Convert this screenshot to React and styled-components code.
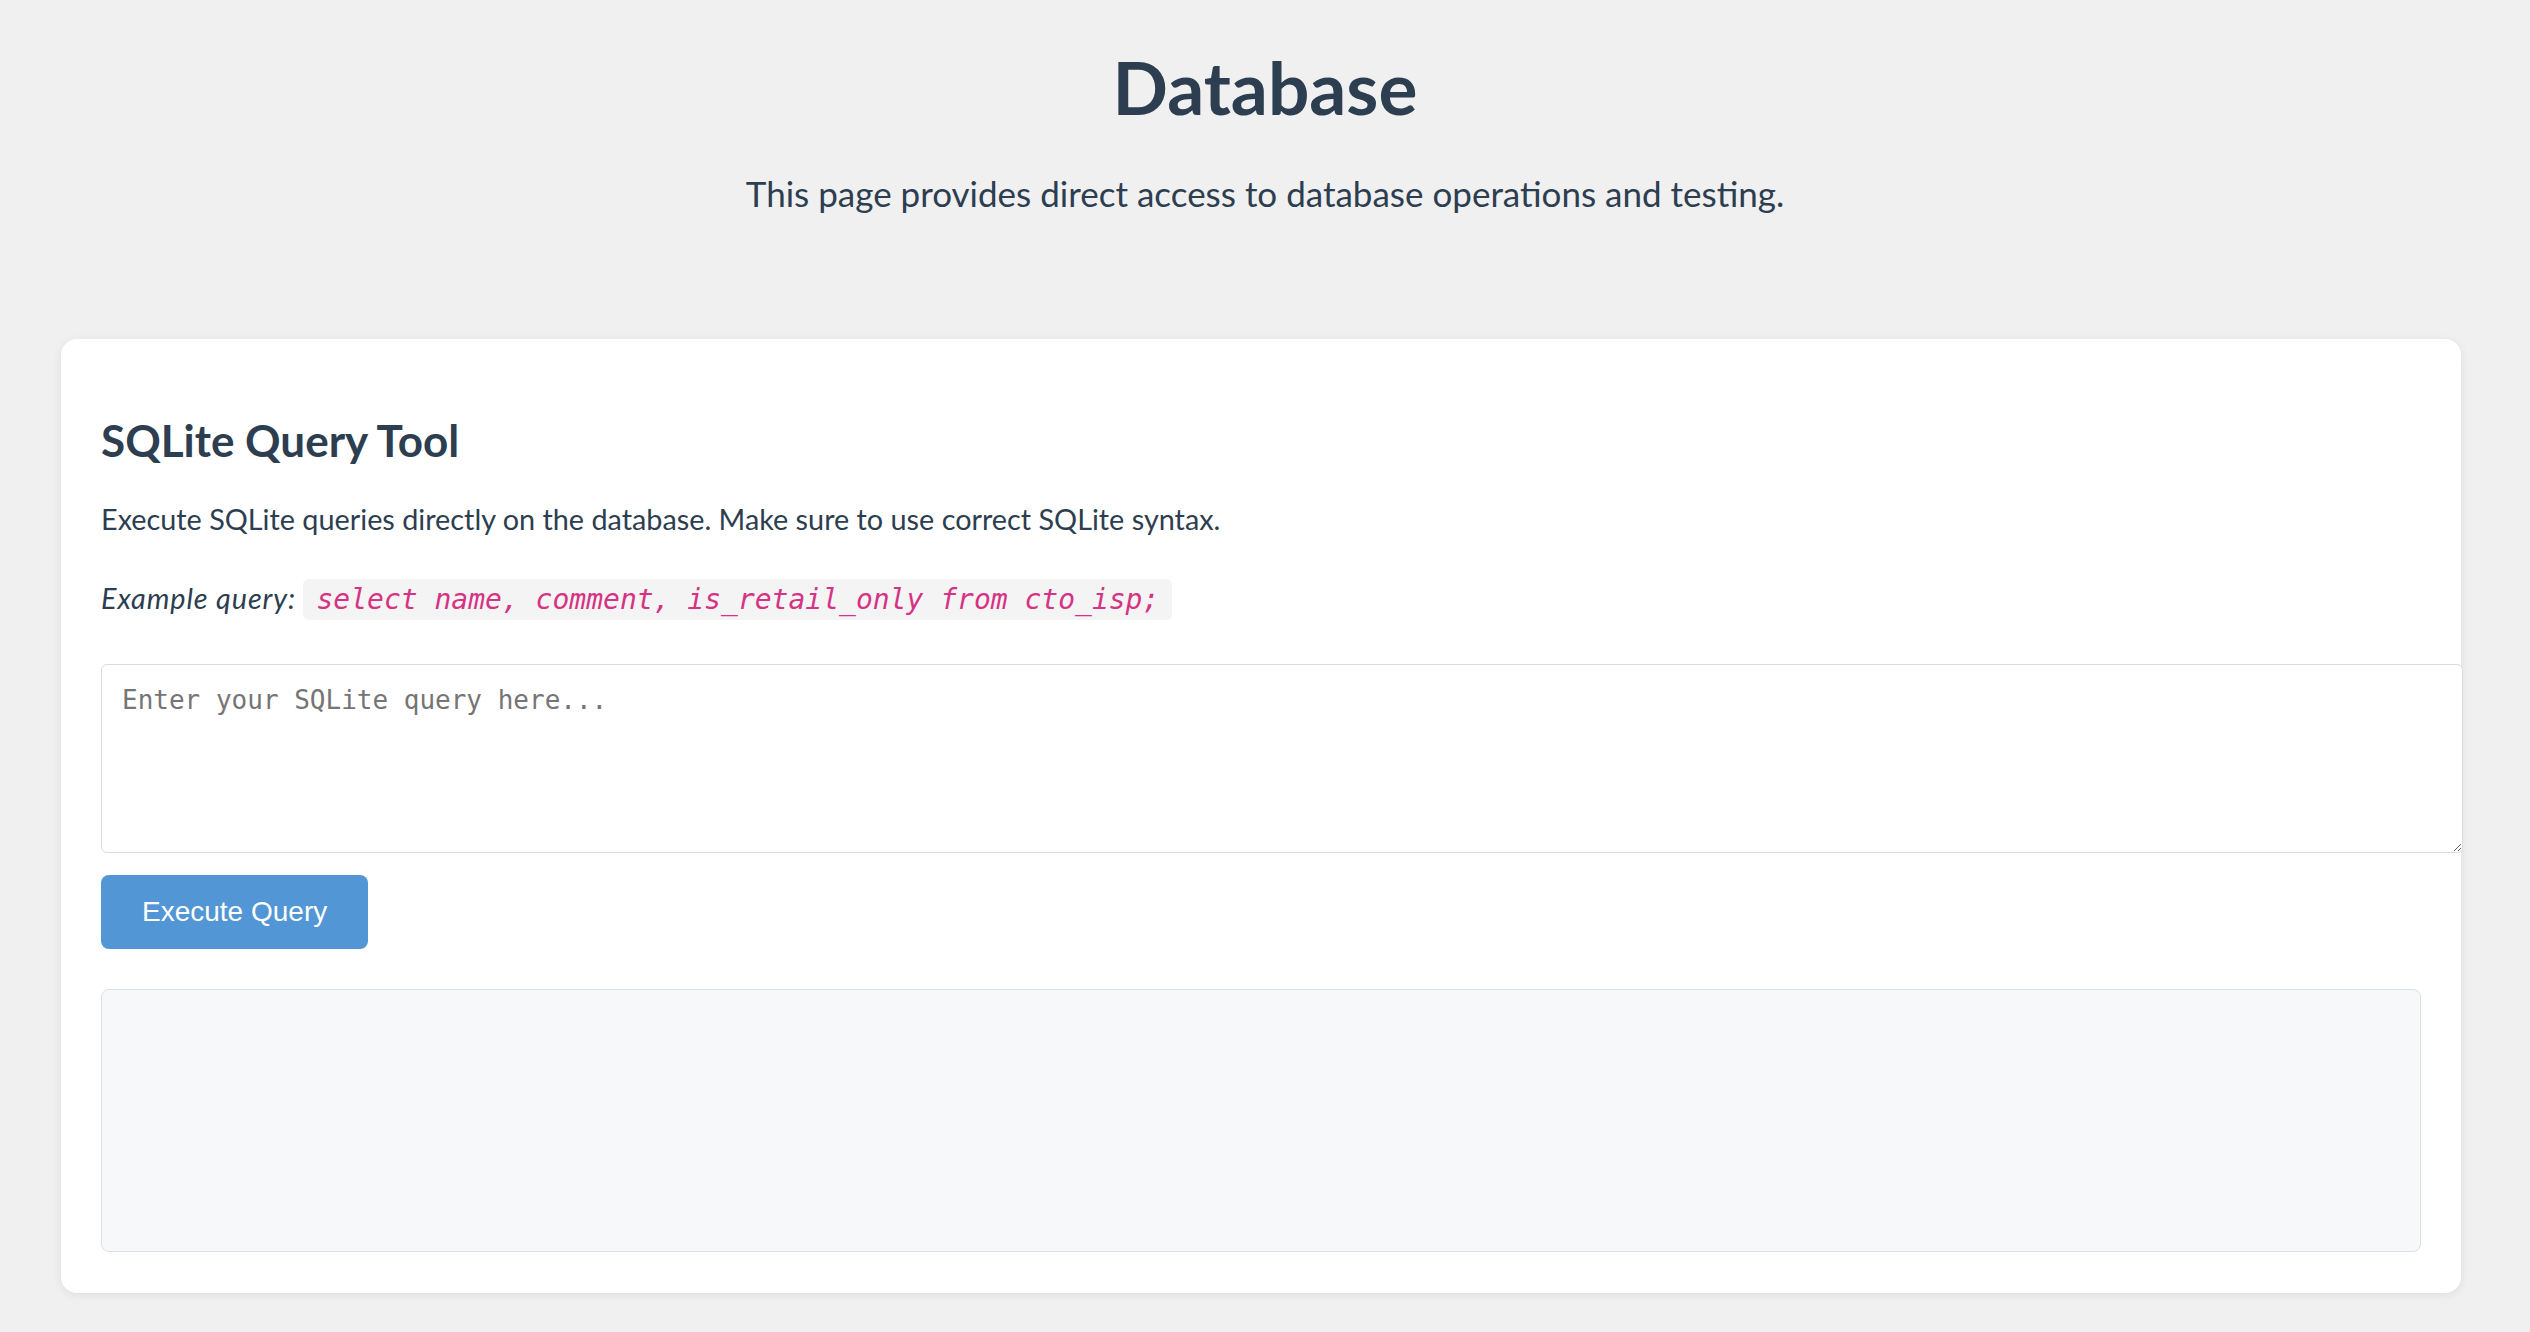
import React from "react";
import styled, { createGlobalStyle } from "styled-components";

const GlobalStyle = createGlobalStyle`
  body {
    margin: 0;
    background-color: #f0f0f0;
    font-family: Lato, "Noto Sans", sans-serif;
    color: #2c3e50;
  }
`;

const Page = styled.div`
  padding-top: 44px;
  padding-bottom: 41px;
`;

const Header = styled.header`
  text-align: center;
`;

const Title = styled.h1`
  margin: 0;
  font-size: 73px;
  font-weight: 700;
  line-height: 1.2;
`;

const Subtitle = styled.p`
  margin: 40px 0 0;
  font-size: 35px;
  line-height: 1.2;
`;

const Card = styled.section`
  width: 2400px;
  box-sizing: border-box;
  margin: 125px 0 0 61px;
  padding: 75px 40px 41px;
  background-color: #fff;
  border-radius: 16px;
  box-shadow: 0 2px 10px rgba(0, 0, 0, 0.08);
`;

const CardTitle = styled.h2`
  margin: 0;
  font-size: 44px;
  font-weight: 700;
  line-height: 1.2;
`;

const Text = styled.p`
  margin: ${(p) => p.$gap}px 0 0;
  font-size: 28.8px;
  line-height: 1.2;
`;

const Label = styled.em`
  letter-spacing: 0.9px;
`;

const Code = styled.code`
  font-family: "DejaVu Sans Mono", monospace;
  font-size: 28px;
  font-style: italic;
  color: #d63384;
  background-color: #f4f4f4;
  padding: 4px 13px;
  border-radius: 6px;
`;

const QueryInput = styled.textarea`
  display: block;
  width: 100%;
  height: 147px;
  margin-top: 47px;
  padding: 20px;
  border: 1px solid #d9dde2;
  border-radius: 6px;
  font-family: "DejaVu Sans Mono", monospace;
  font-size: 26px;
  color: #2c3e50;
  background: #fff;

  &::placeholder {
    color: #757575;
  }
`;

const Button = styled.button`
  display: flex;
  align-items: center;
  justify-content: center;
  height: 74px;
  margin-top: 22px;
  padding: 0 41px;
  border: none;
  border-radius: 8px;
  background-color: #5296d5;
  color: #fff;
  font-family: "Liberation Sans", Arial, sans-serif;
  font-size: 28px;
  cursor: pointer;
`;

const Output = styled.div`
  height: 263px;
  margin-top: 40px;
  box-sizing: border-box;
  border: 1.5px solid #dcdfe3;
  border-radius: 8px;
  background-color: #f7f8fa;
`;

function App() {
  return (
    <Page>
      <GlobalStyle />
      <Header>
        <Title>Database</Title>
        <Subtitle>This page provides direct access to database operations and testing.</Subtitle>
      </Header>
      <Card>
        <CardTitle>SQLite Query Tool</CardTitle>
        <Text $gap={36}>
          Execute SQLite queries directly on the database. Make sure to use correct SQLite syntax.
        </Text>
        <Text $gap={44}>
          <Label>Example query:</Label> <Code>select name, comment, is_retail_only from cto_isp;</Code>
        </Text>
        <QueryInput placeholder="Enter your SQLite query here..." />
        <Button>Execute Query</Button>
        <Output />
      </Card>
    </Page>
  );
}

export default App;
